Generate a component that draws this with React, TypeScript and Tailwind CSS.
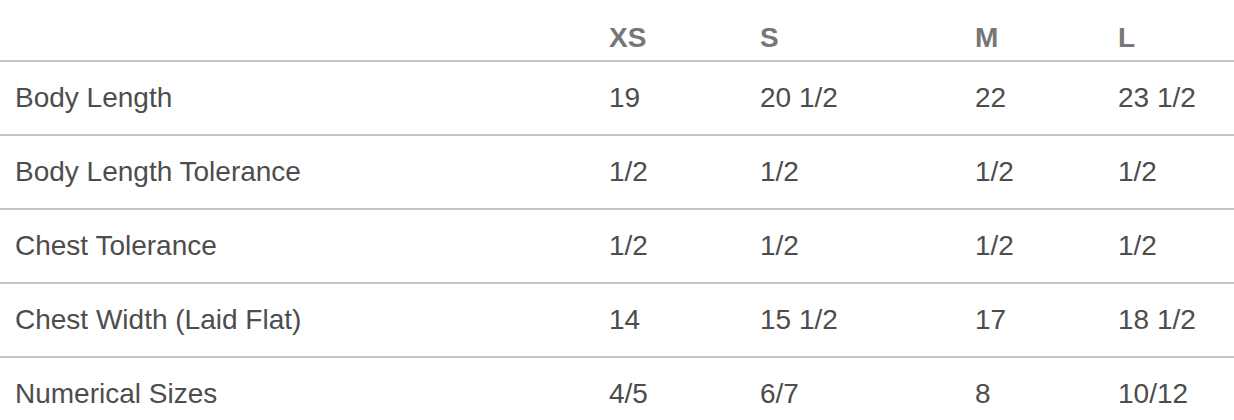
import React from "react";

const sizes = ["XS", "S", "M", "L"];
const rows: [string, string[]][] = [
  ["Body Length", ["19", "20 1/2", "22", "23 1/2"]],
  ["Body Length Tolerance", ["1/2", "1/2", "1/2", "1/2"]],
  ["Chest Tolerance", ["1/2", "1/2", "1/2", "1/2"]],
  ["Chest Width (Laid Flat)", ["14", "15 1/2", "17", "18 1/2"]],
  ["Numerical Sizes", ["4/5", "6/7", "8", "10/12"]],
];

const cols = "grid grid-cols-[594px_151px_215px_143px_131px]";

export default function App() {
  return (
    <div
      className="w-[1234px] h-[420px] bg-white overflow-hidden"
      style={{ fontFamily: '"Liberation Sans", Arial, Helvetica, sans-serif' }}
    >
      <div className={`${cols} border-b-2 border-[#c4c4c4] pt-[22px] pb-[6px] text-[28px] leading-[32px] font-bold text-[#777777]`}>
        <div className="pl-[15px]"></div>
        {sizes.map((s) => (
          <div key={s} className="pl-[15px]">
            {s}
          </div>
        ))}
      </div>
      {rows.map(([label, vals], i) => (
        <div
          key={label}
          className={`${cols} ${i < rows.length - 1 ? "border-b-2 border-[#c4c4c4]" : ""} py-[20px] text-[28px] leading-[32px] text-[#4d4d4d]`}
        >
          <div className="pl-[15px]">{label}</div>
          {vals.map((v, j) => (
            <div key={j} className="pl-[15px]">
              {v}
            </div>
          ))}
        </div>
      ))}
    </div>
  );
}
